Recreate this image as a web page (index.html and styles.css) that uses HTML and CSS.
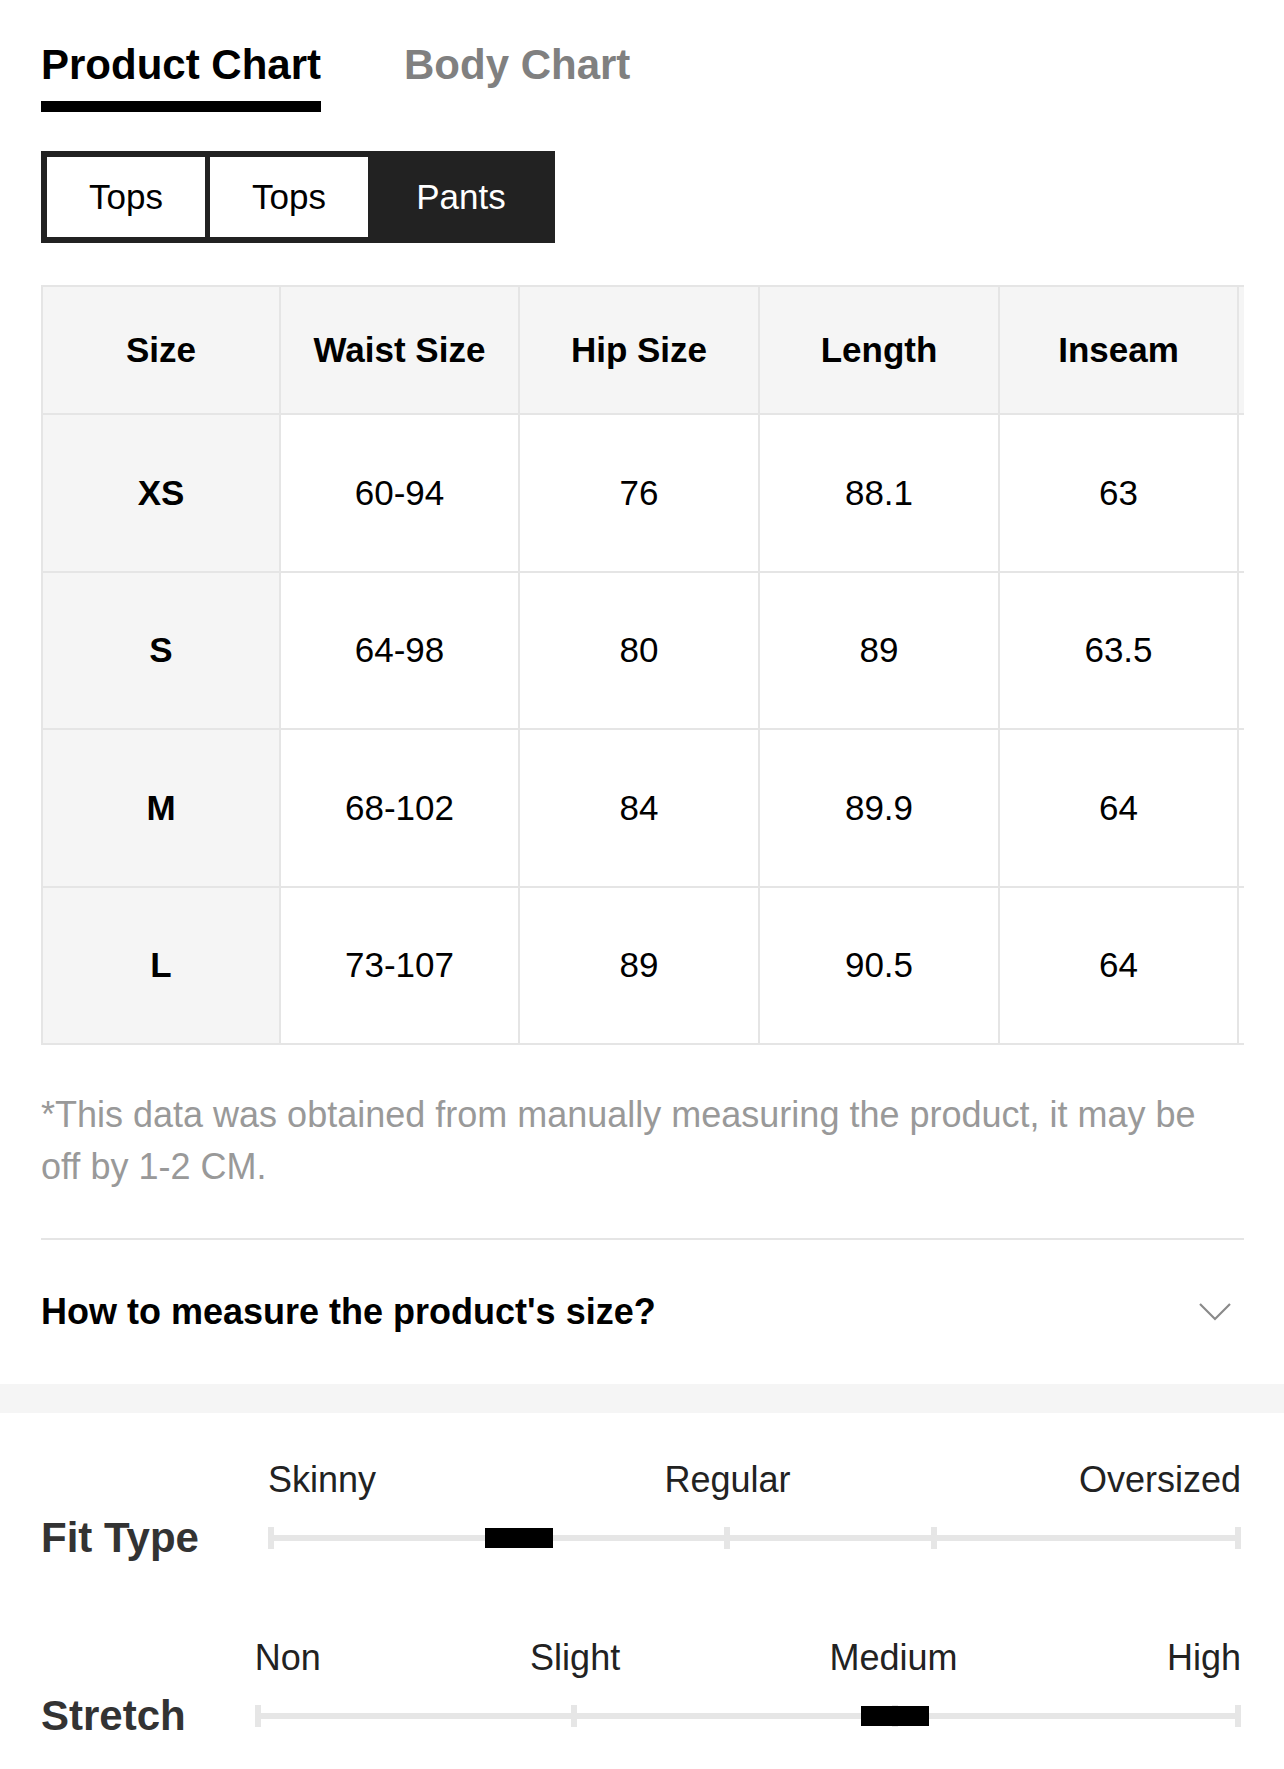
FILE: index.html
```html
<!DOCTYPE html>
<html lang="en">
<head>
<meta charset="utf-8">
<title>Size Chart</title>
<link rel="stylesheet" href="styles.css">
</head>
<body>
<main class="page">
  <div class="chart-panel">
    <nav class="tabs">
      <div class="tab tab-active">Product Chart</div>
      <div class="tab">Body Chart</div>
    </nav>

    <div class="segments">
      <div class="seg">Tops</div>
      <div class="seg">Tops</div>
      <div class="seg seg-active">Pants</div>
    </div>

    <div class="table-wrap">
      <table class="size-table">
        <thead>
          <tr class="head-row">
            <th class="c1">Size</th>
            <th class="c2">Waist Size</th>
            <th class="c3">Hip Size</th>
            <th class="c4">Length</th>
            <th class="c5">Inseam</th>
            <th class="c6"></th>
          </tr>
        </thead>
        <tbody>
          <tr class="body-row"><td class="size-cell">XS</td><td>60-94</td><td>76</td><td>88.1</td><td>63</td><td></td></tr>
          <tr class="body-row"><td class="size-cell">S</td><td>64-98</td><td>80</td><td>89</td><td>63.5</td><td></td></tr>
          <tr class="body-row"><td class="size-cell">M</td><td>68-102</td><td>84</td><td>89.9</td><td>64</td><td></td></tr>
          <tr class="body-row"><td class="size-cell">L</td><td>73-107</td><td>89</td><td>90.5</td><td>64</td><td></td></tr>
        </tbody>
      </table>
    </div>

    <p class="note">*This data was obtained from manually measuring the product, it may be off by 1-2 CM.</p>

    <div class="howto">
      <span class="howto-text">How to measure the product's size?</span>
      <svg class="chevron" width="34" height="20" viewBox="0 0 34 20" aria-hidden="true">
        <polyline points="2,2 17,17 32,2" fill="none" stroke="#8a8a8a" stroke-width="2.2"/>
      </svg>
    </div>
  </div>

  <div class="band"></div>

  <section class="fit">
    <div class="fit-row">
      <div class="fit-name">Fit Type</div>
      <div class="scale">
        <div class="scale-labels">
          <span>Skinny</span>
          <span>Regular</span>
          <span>Oversized</span>
        </div>
        <div class="track">
          <div class="track-line">
            <span class="tick tick-start"></span>
            <span class="tick tick-mid" style="left:47.2%"></span>
            <span class="tick tick-mid" style="left:68.5%"></span>
            <span class="tick tick-end"></span>
            <span class="marker" style="left:25.8%"></span>
          </div>
        </div>
      </div>
    </div>

    <div class="fit-row">
      <div class="fit-name">Stretch</div>
      <div class="scale">
        <div class="scale-labels">
          <span>Non</span>
          <span>Slight</span>
          <span>Medium</span>
          <span>High</span>
        </div>
        <div class="track">
          <div class="track-line">
            <span class="tick tick-start"></span>
            <span class="tick tick-mid" style="left:32.4%"></span>
            <span class="tick tick-mid" style="left:64.9%"></span>
            <span class="tick tick-end"></span>
            <span class="marker" style="left:64.9%"></span>
          </div>
        </div>
      </div>
    </div>
  </section>
</main>
</body>
</html>
```

FILE: styles.css
```css
* {
  box-sizing: border-box;
}

html, body {
  margin: 0;
  padding: 0;
  background: #ffffff;
}

body {
  font-family: "Liberation Sans", Arial, Helvetica, sans-serif;
  color: #000000;
}

.page {
  width: 1284px;
}

.chart-panel {
  padding: 0 40px 0 41px;
}

/* Tabs */
.tabs {
  display: flex;
  gap: 83px;
  padding-top: 41px;
}

.tab {
  font-size: 42px;
  font-weight: 700;
  line-height: 48px;
  padding-bottom: 12px;
  border-bottom: 11px solid transparent;
  color: #808080;
}

.tab-active {
  color: #000000;
  border-bottom-color: #000000;
}

/* Segmented buttons */
.segments {
  display: flex;
  width: max-content;
  margin-top: 39px;
  border: 6px solid #222222;
  background: #222222;
  gap: 5px;
}

.seg {
  width: 158px;
  height: 80px;
  display: flex;
  align-items: center;
  justify-content: center;
  font-size: 35px;
  background: #ffffff;
  color: #000000;
}

.seg-active {
  width: 176px;
  background: #222222;
  color: #ffffff;
}

/* Table */
.table-wrap {
  margin-top: 42px;
  width: 1203px;
  overflow: hidden;
}

.size-table {
  border-collapse: separate;
  border-spacing: 0;
  table-layout: fixed;
  width: 1437px;
  border-top: 2px solid #e5e5e5;
  border-left: 2px solid #e5e5e5;
}

.size-table th,
.size-table td {
  border-right: 2px solid #e5e5e5;
  border-bottom: 2px solid #e5e5e5;
  padding: 0;
  text-align: center;
  vertical-align: middle;
  font-size: 35px;
  color: #000000;
}

.size-table th {
  background: #f5f5f5;
  font-weight: 700;
}

.c1 { width: 238px; }
.c2 { width: 239px; }
.c3 { width: 240px; }
.c4 { width: 240px; }
.c5 { width: 239px; }
.c6 { width: 239px; }

.head-row {
  height: 128px;
}

.body-row {
  height: 157.5px;
}

.size-table td.size-cell {
  background: #f5f5f5;
  font-weight: 700;
}

/* Note */
.note {
  margin: 44px 0 0;
  max-width: 1180px;
  font-size: 36px;
  line-height: 52px;
  color: #999999;
}

/* How to measure */
.howto {
  margin-top: 45px;
  border-top: 2px solid #e5e5e5;
  height: 146px;
  display: flex;
  align-items: center;
  justify-content: space-between;
}

.howto-text {
  font-size: 36px;
  font-weight: 700;
}

.chevron {
  display: block;
  margin-right: 12px;
}

.band {
  height: 29px;
  background: #f5f5f5;
}

/* Fit section */
.fit {
  padding: 46px 43px 17px 41px;
}

.fit-row {
  display: flex;
  align-items: flex-end;
}

.fit-row + .fit-row {
  margin-top: 62px;
}

.fit-name {
  font-size: 42px;
  font-weight: 700;
  line-height: 74px;
  color: #333333;
  margin-right: 69px;
}

.scale {
  flex: 1;
}

.scale-labels {
  display: flex;
  justify-content: space-between;
  font-size: 36px;
  line-height: 42px;
  color: #222222;
}

.track {
  height: 74px;
  padding-top: 34px;
}

.track-line {
  position: relative;
  height: 6px;
  background: #e6e6e6;
}

.tick {
  position: absolute;
  top: -8px;
  width: 6px;
  height: 22px;
  background: #e6e6e6;
}

.tick-start {
  left: 0;
}

.tick-end {
  right: 0;
}

.tick-mid {
  transform: translateX(-50%);
}

.marker {
  position: absolute;
  top: -7px;
  width: 68px;
  height: 20px;
  background: #000000;
  transform: translateX(-50%);
}
```
